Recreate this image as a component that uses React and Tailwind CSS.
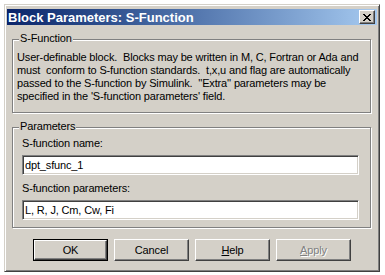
import React from 'react';

const raised =
  'bg-[#d4d0c8] border border-t-white border-l-white border-r-[#404040] border-b-[#404040] shadow-[inset_-1px_-1px_0_#808080]';

const sunken =
  'bg-white border border-t-[#808080] border-l-[#808080] border-r-white border-b-white shadow-[inset_1px_1px_0_#404040,inset_-1px_-1px_0_#d4d0c8]';

const etched = 'relative border border-[#808080] shadow-[inset_1px_1px_0_#fff,1px_1px_0_#fff]';

const GroupBox = ({ title, className, children }) => (
  <div className={`${etched} ml-[5px] w-[359px] ${className}`}>
    <span className="absolute left-[6px] top-[-8px] px-px bg-[#d4d0c8] leading-[13px]">{title}</span>
    {children}
  </div>
);

const Field = ({ value, className }) => (
  <div className={`${sunken} w-[337px] h-[20px] flex items-center pl-[2px] ${className}`}>{value}</div>
);

const Button = ({ children, isDefault, disabled }) => {
  const inner = (
    <div
      className={`${raised} h-full w-full flex items-center justify-center ${
        disabled ? 'text-[#808080] [text-shadow:1px_1px_0_#fff]' : 'text-black'
      }`}
    >
      {children}
    </div>
  );
  if (isDefault) {
    return <div className="w-[75px] h-[22px] border border-black">{inner}</div>;
  }
  return <div className="w-[75px] h-[22px]">{inner}</div>;
};

const App = () => {
  return (
    <div className="min-h-screen bg-white p-[4px] font-['Liberation_Sans',Arial,sans-serif] text-[11px] tracking-[-0.15px] text-black">
      <div className="w-[376px] h-[268px] bg-[#d4d0c8] border border-t-[#d4d0c8] border-l-[#d4d0c8] border-r-[#404040] border-b-[#404040] shadow-[inset_1px_1px_0_#fff,inset_-1px_-1px_0_#808080] pt-[4px] px-[2px]">
        {/* Title bar */}
        <div className="h-[16px] flex items-center justify-between bg-linear-to-r from-[#0a246a] to-[#a6caf0]">
          <span className="pl-px text-white font-bold text-[13px] leading-none tracking-normal">
            Block Parameters: S-Function
          </span>
          <div className={`${raised} w-[16px] h-[14px] mr-[2px] flex items-center justify-center`}>
            <svg width="8" height="7" viewBox="0 0 8 7" shapeRendering="crispEdges">
              <path d="M0 0h2v1h-2zM6 0h2v1h-2zM1 1h2v1h-2zM5 1h2v1h-2zM2 2h4v1h-4zM3 3h2v1h-2zM2 4h4v1h-4zM1 5h2v1h-2zM5 5h2v1h-2zM0 6h2v1h-2zM6 6h2v1h-2z" fill="#000" />
            </svg>
          </div>
        </div>

        {/* Description */}
        <GroupBox title="S-Function" className="mt-[14px] h-[74px] pt-[11px] pl-[4px]">
          <p className="leading-[13px] whitespace-pre">
            {'User-definable block.  Blocks may be written in M, C, Fortran or Ada and\n'}
            {'must  conform to S-function standards.  t,x,u and flag are automatically\n'}
            {"passed to the S-function by Simulink.  ''Extra'' parameters may be\n"}
            {"specified in the 'S-function parameters' field."}
          </p>
        </GroupBox>

        {/* Parameters */}
        <GroupBox title="Parameters" className="mt-[14px] h-[101px] pt-[9px] pl-[9px]">
          <div className="leading-[13px]">S-function name:</div>
          <Field value="dpt_sfunc_1" className="mt-[5px]" />
          <div className="leading-[13px] mt-[7px]">S-function parameters:</div>
          <Field value="L, R, J, Cm, Cw, Fi" className="mt-[5px]" />
        </GroupBox>

        {/* Buttons */}
        <div className="mt-[11px] flex justify-center gap-[6px]">
          <Button isDefault>OK</Button>
          <Button>Cancel</Button>
          <Button>
            <span><u>H</u>elp</span>
          </Button>
          <Button disabled>
            <span><u>A</u>pply</span>
          </Button>
        </div>
      </div>
    </div>
  );
};

export default App;
